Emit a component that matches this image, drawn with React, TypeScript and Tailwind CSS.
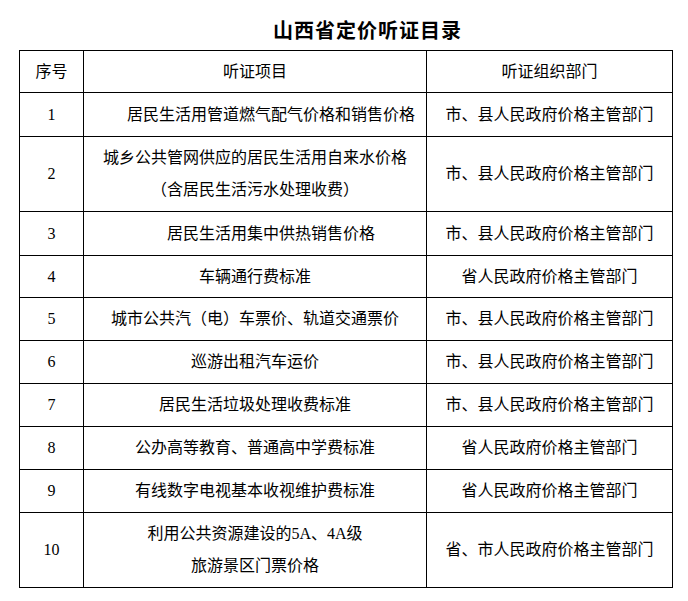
const rows = [
  { no: "1", item: ["居民生活用管道燃气配气价格和销售价格"], dept: "市、县人民政府价格主管部门", h: "h-[44px]", indent: true },
  { no: "2", item: ["城乡公共管网供应的居民生活用自来水价格", "（含居民生活污水处理收费）"], dept: "市、县人民政府价格主管部门", h: "h-[75px]" },
  { no: "3", item: ["居民生活用集中供热销售价格"], dept: "市、县人民政府价格主管部门", h: "h-[44px]", indent: true },
  { no: "4", item: ["车辆通行费标准"], dept: "省人民政府价格主管部门", h: "h-[42px]" },
  { no: "5", item: ["城市公共汽（电）车票价、轨道交通票价"], dept: "市、县人民政府价格主管部门", h: "h-[43px]" },
  { no: "6", item: ["巡游出租汽车运价"], dept: "市、县人民政府价格主管部门", h: "h-[43px]" },
  { no: "7", item: ["居民生活垃圾处理收费标准"], dept: "市、县人民政府价格主管部门", h: "h-[43px]" },
  { no: "8", item: ["公办高等教育、普通高中学费标准"], dept: "省人民政府价格主管部门", h: "h-[43px]" },
  { no: "9", item: ["有线数字电视基本收视维护费标准"], dept: "省人民政府价格主管部门", h: "h-[43px]" },
  { no: "10", item: ["利用公共资源建设的5A、4A级", "旅游景区门票价格"], dept: "省、市人民政府价格主管部门", h: "h-[75px]" },
];

const cell = "border border-black text-center align-middle p-0";

export default function App() {
  return (
    <div className="w-[688px] h-[601px] bg-white text-black font-['Liberation_Serif','Noto_Sans_CJK_SC',serif]">
      <div className="pt-[16px] pl-[47px] text-center h-[44px]">
        <h1 className="text-[20px] leading-[28px] font-bold tracking-[1px] font-['Noto_Sans_CJK_SC',serif]">
          山西省定价听证目录
        </h1>
      </div>

      <table className="ml-[19px] mt-[6px] w-[653px] table-fixed border-collapse text-[16px] leading-[32px]">
        <colgroup>
          <col className="w-[64px]" />
          <col className="w-[343px]" />
          <col className="w-[246px]" />
        </colgroup>
        <thead>
          <tr className="h-[42px]">
            <th className={`${cell} font-normal`}>序号</th>
            <th className={`${cell} font-normal`}>听证项目</th>
            <th className={`${cell} font-normal`}>听证组织部门</th>
          </tr>
        </thead>
        <tbody>
          {rows.map((row) => (
            <tr key={row.no} className={row.h}>
              <td className={cell}>{row.no}</td>
              <td className={`${cell} ${row.indent ? "pl-8" : ""}`}>
                {row.item.map((line) => (
                  <div key={line}>{line}</div>
                ))}
              </td>
              <td className={cell}>{row.dept}</td>
            </tr>
          ))}
        </tbody>
      </table>
    </div>
  );
}
